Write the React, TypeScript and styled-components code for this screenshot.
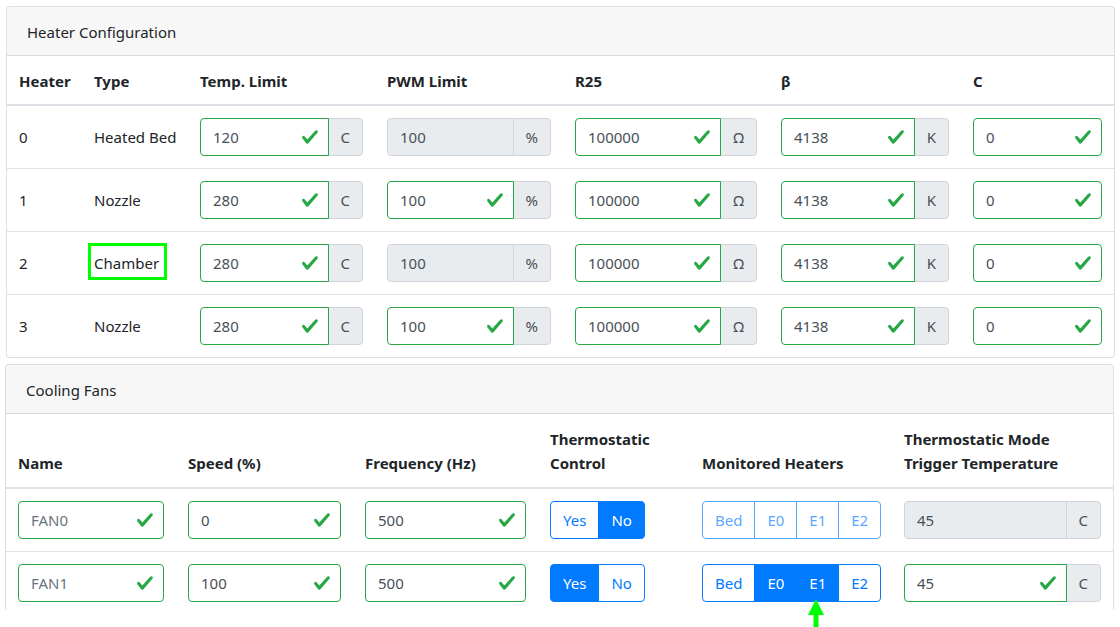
import React from 'react'
import styled, { createGlobalStyle, css } from 'styled-components'

const GlobalStyle = createGlobalStyle`
    * {
        box-sizing: border-box;
    }
    body {
        margin: 0;
        background: #fff;
        font-family: 'Segoe UI', 'Noto Sans', 'Liberation Sans', sans-serif;
        font-size: 15px;
        line-height: 24px;
        color: #212529;
    }
`

type Field = {
    value?: string
    placeholder?: string
    unit?: string
    disabled?: boolean
}

type Heater = {
    id: number
    type: string
    marked?: boolean
    temp: Field
    pwm: Field
    r25: Field
    beta: Field
    c: Field
}

const heaters: Heater[] = [
    {
        id: 0,
        type: 'Heated Bed',
        temp: { value: '120', unit: 'C' },
        pwm: { value: '100', unit: '%', disabled: true },
        r25: { value: '100000', unit: 'Ω' },
        beta: { value: '4138', unit: 'K' },
        c: { value: '0' },
    },
    {
        id: 1,
        type: 'Nozzle',
        temp: { value: '280', unit: 'C' },
        pwm: { value: '100', unit: '%' },
        r25: { value: '100000', unit: 'Ω' },
        beta: { value: '4138', unit: 'K' },
        c: { value: '0' },
    },
    {
        id: 2,
        type: 'Chamber',
        marked: true,
        temp: { value: '280', unit: 'C' },
        pwm: { value: '100', unit: '%', disabled: true },
        r25: { value: '100000', unit: 'Ω' },
        beta: { value: '4138', unit: 'K' },
        c: { value: '0' },
    },
    {
        id: 3,
        type: 'Nozzle',
        temp: { value: '280', unit: 'C' },
        pwm: { value: '100', unit: '%' },
        r25: { value: '100000', unit: 'Ω' },
        beta: { value: '4138', unit: 'K' },
        c: { value: '0' },
    },
]

type Fan = {
    name: string
    speed: string
    frequency: string
    thermostatic: boolean
    heaters: string[]
    trigger: string
}

const fans: Fan[] = [
    { name: 'FAN0', speed: '0', frequency: '500', thermostatic: false, heaters: [], trigger: '45' },
    { name: 'FAN1', speed: '100', frequency: '500', thermostatic: true, heaters: ['E0', 'E1'], trigger: '45' },
]

const heaterNames = ['Bed', 'E0', 'E1', 'E2']

const CheckIcon = () => (
    <CheckMark viewBox="0 0 8 8" width="18" height="18">
        <path
            fill="#28a745"
            d="M2.3 6.73L.6 4.53c-.4-1.04.46-1.4 1.1-.8l1.1 1.4 3.4-3.8c.6-.63 1.6-.27 1.2.7l-4 4.6c-.43.5-.8.4-1.1.1z"
        />
    </CheckMark>
)

const FieldInput = ({ field }: { field: Field }) => (
    <InputGroup>
        <InputWrap>
            <Input
                readOnly
                disabled={field.disabled}
                $valid={!field.disabled}
                $joined={!!field.unit}
                value={field.value ?? ''}
                placeholder={field.placeholder}
            />
            {!field.disabled && <CheckIcon />}
        </InputWrap>
        {field.unit && <Append>{field.unit}</Append>}
    </InputGroup>
)

export default function App() {
    return (
        <Root>
            <GlobalStyle />
            <Page>
                <Card>
                    <CardHeader>Heater Configuration</CardHeader>
                    <Table>
                        <colgroup>
                            <col style={{ width: 75 }} />
                            <col style={{ width: 106 }} />
                            <col style={{ width: 187 }} />
                            <col style={{ width: 188 }} />
                            <col style={{ width: 206 }} />
                            <col style={{ width: 192 }} />
                            <col />
                        </colgroup>
                        <thead>
                            <tr>
                                <Th>Heater</Th>
                                <Th>Type</Th>
                                <Th>Temp. Limit</Th>
                                <Th>PWM Limit</Th>
                                <Th>R25</Th>
                                <Th>β</Th>
                                <Th>C</Th>
                            </tr>
                        </thead>
                        <tbody>
                            {heaters.map((h) => (
                                <tr key={h.id}>
                                    <Td>{h.id}</Td>
                                    <Td>{h.marked ? <Marked>{h.type}</Marked> : h.type}</Td>
                                    <Td>
                                        <FieldInput field={h.temp} />
                                    </Td>
                                    <Td>
                                        <FieldInput field={h.pwm} />
                                    </Td>
                                    <Td>
                                        <FieldInput field={h.r25} />
                                    </Td>
                                    <Td>
                                        <FieldInput field={h.beta} />
                                    </Td>
                                    <Td>
                                        <FieldInput field={h.c} />
                                    </Td>
                                </tr>
                            ))}
                        </tbody>
                    </Table>
                </Card>

                <Card $shift>
                    <CardHeader>Cooling Fans</CardHeader>
                    <Table>
                        <colgroup>
                            <col style={{ width: 170 }} />
                            <col style={{ width: 177 }} />
                            <col style={{ width: 185 }} />
                            <col style={{ width: 152 }} />
                            <col style={{ width: 202 }} />
                            <col />
                        </colgroup>
                        <thead>
                            <tr>
                                <Th $tall>Name</Th>
                                <Th $tall>Speed (%)</Th>
                                <Th $tall>Frequency (Hz)</Th>
                                <Th $tall>
                                    Thermostatic
                                    <br />
                                    Control
                                </Th>
                                <Th $tall>Monitored Heaters</Th>
                                <Th $tall>
                                    Thermostatic Mode
                                    <br />
                                    Trigger Temperature
                                </Th>
                            </tr>
                        </thead>
                        <tbody>
                            {fans.map((f) => (
                                <tr key={f.name}>
                                    <Td>
                                        <FieldInput field={{ placeholder: f.name }} />
                                    </Td>
                                    <Td>
                                        <FieldInput field={{ value: f.speed }} />
                                    </Td>
                                    <Td>
                                        <FieldInput field={{ value: f.frequency }} />
                                    </Td>
                                    <Td>
                                        <ButtonGroup>
                                            <GroupButton $active={f.thermostatic}>Yes</GroupButton>
                                            <GroupButton $active={!f.thermostatic}>No</GroupButton>
                                        </ButtonGroup>
                                    </Td>
                                    <Td>
                                        <ButtonGroup $disabled={!f.thermostatic}>
                                            {heaterNames.map((n) => (
                                                <GroupButton key={n} $active={f.heaters.includes(n)}>
                                                    {n}
                                                </GroupButton>
                                            ))}
                                        </ButtonGroup>
                                    </Td>
                                    <Td>
                                        <FieldInput
                                            field={{ value: f.trigger, unit: 'C', disabled: !f.thermostatic }}
                                        />
                                    </Td>
                                </tr>
                            ))}
                        </tbody>
                    </Table>
                </Card>
            </Page>
            <Arrow viewBox="0 0 16 28" width="16" height="28">
                <polygon points="8,0 0,16 16,16" fill="#00ff00" />
                <rect x="5.5" y="15" width="5" height="13" fill="#00ff00" />
            </Arrow>
        </Root>
    )
}

const Root = styled.div`
    position: relative;
    width: 1120px;
    height: 627px;
    overflow: hidden;
`

const Page = styled.div`
    height: 610px;
    overflow: hidden;
    padding: 6px 5px 0 6px;
`

const Card = styled.section<{ $shift?: boolean }>`
    background: #fff;
    border: 1px solid rgba(0, 0, 0, 0.125);
    border-radius: 4px;
    margin-bottom: 6px;
    overflow: hidden;
    ${({ $shift }) =>
        $shift &&
        css`
            margin-left: -1px;
            margin-right: 1px;
        `}
`

const CardHeader = styled.div`
    padding: 13px 20px 11px;
    background: rgba(0, 0, 0, 0.03);
    border-bottom: 1px solid rgba(0, 0, 0, 0.125);
`

const Table = styled.table`
    width: 100%;
    table-layout: fixed;
    border-collapse: collapse;
`

const Th = styled.th<{ $tall?: boolean }>`
    padding: ${({ $tall }) => ($tall ? '13px 12px 12px' : '13px 12px 11px')};
    text-align: left;
    vertical-align: bottom;
    font-weight: 700;
    border-bottom: 2px solid #dee2e6;
    white-space: nowrap;
`

const Td = styled.td`
    padding: 12px;
    vertical-align: middle;
    border-top: 1px solid #dee2e6;
    white-space: nowrap;
`

const Marked = styled.span`
    display: inline-block;
    outline: 3px solid #00ff00;
    outline-offset: 2px;
    margin: -3px 0 0 -1px;
    padding: 3px 3px 0 1px;
`

const InputGroup = styled.div`
    display: flex;
    align-items: stretch;
    width: 100%;
`

const InputWrap = styled.div`
    position: relative;
    flex: 1 1 auto;
    min-width: 0;
    z-index: 1;
`

const Input = styled.input<{ $valid: boolean; $joined: boolean }>`
    display: block;
    width: 100%;
    height: 38px;
    padding: 6px 12px;
    font: inherit;
    line-height: 24px;
    color: #495057;
    background: #fff;
    border: 1px solid #ced4da;
    border-radius: ${({ $joined }) => ($joined ? '4px 0 0 4px' : '4px')};
    outline: none;
    ${({ $valid }) =>
        $valid &&
        css`
            border-color: #28a745;
            padding-right: 36px;
        `}
    &:disabled {
        background: #e9ecef;
        opacity: 1;
        color: #495057;
    }
    &::placeholder {
        color: #6c757d;
        opacity: 1;
    }
`

const CheckMark = styled.svg`
    position: absolute;
    right: 10px;
    top: 10px;
    pointer-events: none;
`

const Append = styled.span`
    display: flex;
    align-items: center;
    padding: 6px 12px;
    margin-left: -1px;
    color: #495057;
    background: #e9ecef;
    border: 1px solid #ced4da;
    border-radius: 0 4px 4px 0;
`

const ButtonGroup = styled.div<{ $disabled?: boolean }>`
    display: inline-flex;
    opacity: ${({ $disabled }) => ($disabled ? 0.65 : 1)};
`

const GroupButton = styled.button<{ $active: boolean }>`
    font: inherit;
    line-height: 24px;
    height: 38px;
    padding: 6px 12px;
    border: 1px solid #007bff;
    background: ${({ $active }) => ($active ? '#007bff' : '#fff')};
    color: ${({ $active }) => ($active ? '#fff' : '#007bff')};
    border-radius: 0;
    & + & {
        margin-left: -1px;
    }
    &:first-child {
        border-radius: 4px 0 0 4px;
    }
    &:last-child {
        border-radius: 0 4px 4px 0;
    }
`

const Arrow = styled.svg`
    position: absolute;
    left: 808px;
    top: 599px;
`
